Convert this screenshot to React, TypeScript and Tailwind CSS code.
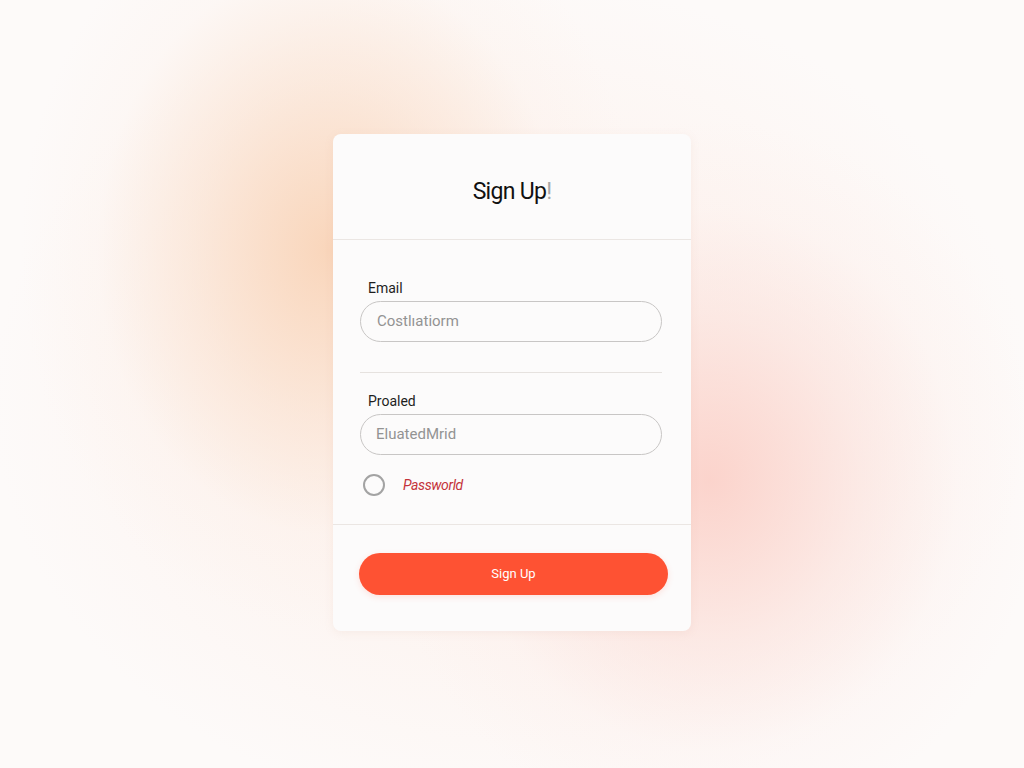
import React from "react";

export default function App() {
  return (
    <div
      className="min-h-screen w-full flex justify-center pt-[134px] bg-[#fdfaf9] bg-[radial-gradient(ellipse_310px_380px_at_330px_250px,rgba(249,212,184,0.95),rgba(250,222,202,0.55)_45%,rgba(252,236,226,0.2)_75%,transparent_100%),radial-gradient(ellipse_330px_360px_at_710px_480px,rgba(251,208,200,0.9),rgba(251,220,214,0.5)_45%,rgba(252,234,230,0.2)_75%,transparent_100%),radial-gradient(ellipse_520px_420px_at_512px_400px,rgba(252,232,222,0.6),transparent_100%)]"
      style={{ fontFamily: "Roboto, 'Liberation Sans', sans-serif" }}
    >
      <div className="w-[358px] h-[497px] bg-[#fcfbfb] rounded-lg shadow-[0_2px_10px_rgba(200,150,130,0.10)] flex flex-col">
        <div className="h-[106px] flex items-center justify-center pt-[11px] border-b border-[#ebe6e3]">
          <h1 className="text-[23px] font-normal tracking-[-0.7px] text-[#111111]">
            Sign Up<span className="text-[#a9a9a9]">!</span>
          </h1>
        </div>
        <div className="flex flex-col pl-[27px] pr-[29px] pt-[38px] pb-[28px] border-b border-[#ebe6e3]">
          <label className="pl-[8px] text-[14px] leading-[20px] text-[#1e1e1e]">Email</label>
          <div className="mt-[3px] h-[41px] rounded-full border border-[#c8c6c5] bg-[#fcfbfb] flex items-center pl-[16px] text-[15px] text-[#939393]">
            Costlıatiorm
          </div>
          <div className="mt-[30px] h-px bg-[#e6e2df]" />
          <label className="mt-[18px] pl-[8px] text-[14px] leading-[20px] text-[#1e1e1e]">Proaled</label>
          <div className="mt-[3px] h-[41px] rounded-full border border-[#c8c6c5] bg-[#fcfbfb] flex items-center pl-[15px] text-[15px] text-[#939393]">
            EluatedMrid
          </div>
          <div className="mt-[19px] flex items-center">
            <div className="ml-[3px] w-[22px] h-[22px] rounded-full border-2 border-[#a3a3a3]" />
            <span className="ml-[18px] text-[14px] italic text-[#c4333a] tracking-[-0.4px]">Passworld</span>
          </div>
        </div>
        <div className="pl-[26px] pr-[23px] pt-[28px]">
          <button className="w-full h-[42px] rounded-full bg-[#fe5233] text-white text-[13px] font-normal shadow-[0_2px_6px_rgba(254,82,51,0.15)]">
            Sign Up
          </button>
        </div>
      </div>
    </div>
  );
}
